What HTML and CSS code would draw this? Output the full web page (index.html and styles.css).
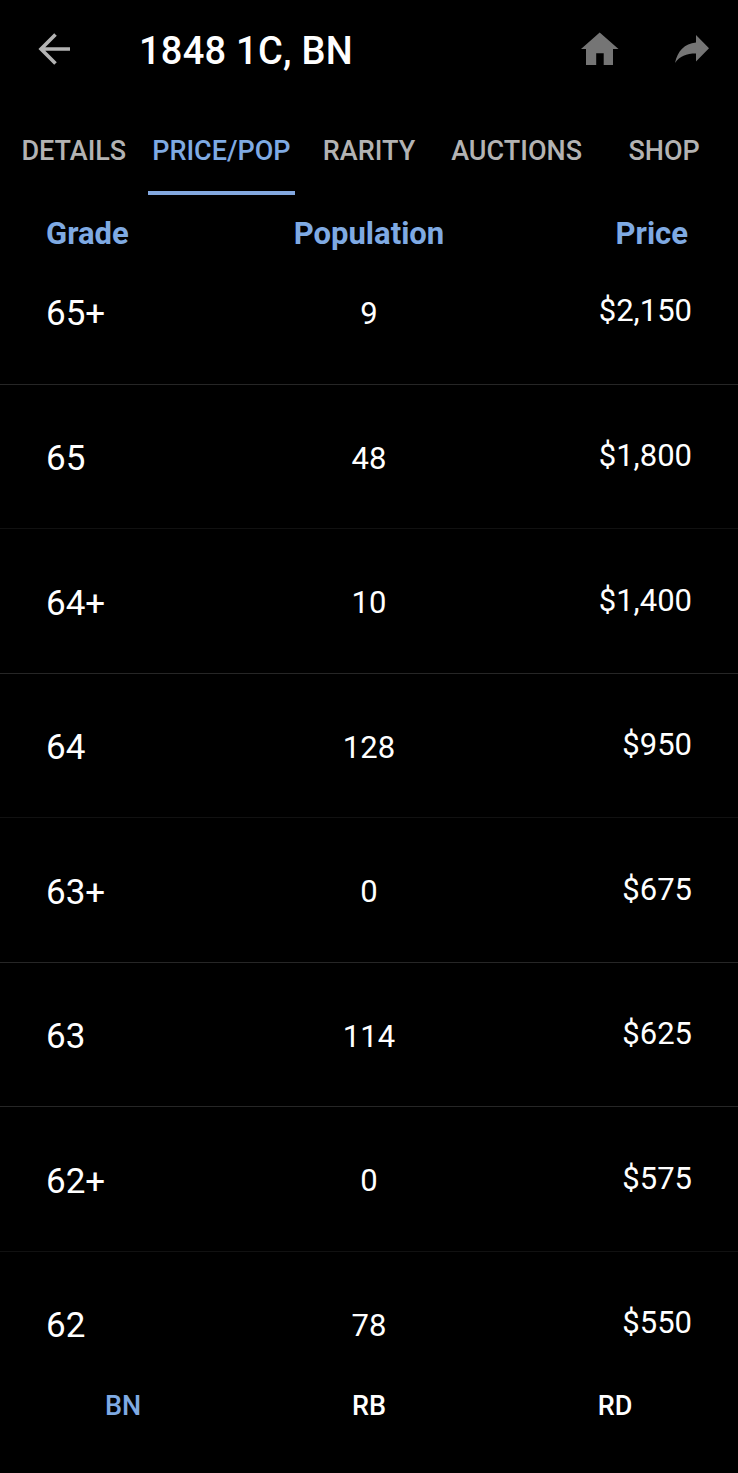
FILE: index.html
```html
<!DOCTYPE html>
<html lang="en">
<head>
    <meta charset="UTF-8">
    <meta name="viewport" content="width=device-width, initial-scale=1.0">
    <title>1848 1C, BN</title>
    <link rel="stylesheet" href="styles.css">
</head>
<body>
    <header class="top-bar">
        <a class="back" aria-label="Back">
            <svg width="32" height="32" viewBox="0 0 32 32"><path d="M32 16H3M17.5 1.5L3 16L17.5 30.5"/></svg>
        </a>
        <h1>1848 1C, BN</h1>
        <a class="home" aria-label="Home">
            <svg width="38" height="34" viewBox="0 0 38 34"><path d="M18.7 0.5L37.5 17H32V33H22.7V21.3H15.2V33H5V17H0Z"/></svg>
        </a>
        <a class="share" aria-label="Share">
            <svg width="36" height="30" viewBox="0 0 36 30"><path d="M22 1L35 14.2L22 27.5V19.5C12 19.5 6 22 1 29C3.5 17 10.5 9.5 22 8.5Z"/></svg>
        </a>
    </header>
    <nav class="tabs">
        <a class="tab">DETAILS</a>
        <a class="tab active">PRICE/POP</a>
        <a class="tab">RARITY</a>
        <a class="tab">AUCTIONS</a>
        <a class="tab">SHOP</a>
    </nav>
    <div class="columns table-head">
        <span>Grade</span>
        <span>Population</span>
        <span>Price</span>
    </div>
    <main class="grade-list">
        <div class="columns row"><span class="grade">65+</span><span class="pop">9</span><span class="price">$2,150</span></div>
        <div class="columns row faint"><span class="grade">65</span><span class="pop">48</span><span class="price">$1,800</span></div>
        <div class="columns row"><span class="grade">64+</span><span class="pop">10</span><span class="price">$1,400</span></div>
        <div class="columns row faint"><span class="grade">64</span><span class="pop">128</span><span class="price">$950</span></div>
        <div class="columns row"><span class="grade">63+</span><span class="pop">0</span><span class="price">$675</span></div>
        <div class="columns row"><span class="grade">63</span><span class="pop">114</span><span class="price">$625</span></div>
        <div class="columns row faint"><span class="grade">62+</span><span class="pop">0</span><span class="price">$575</span></div>
        <div class="columns row"><span class="grade">62</span><span class="pop">78</span><span class="price">$550</span></div>
    </main>
    <nav class="bottom-nav">
        <a class="active">BN</a>
        <a>RB</a>
        <a>RD</a>
    </nav>
</body>
</html>
```
FILE: styles.css
```css
* {
    box-sizing: border-box;
}
body {
    margin: 0;
    height: 1473px;
    display: flex;
    flex-direction: column;
    overflow: hidden;
    background: #000;
    color: #fff;
    font-family: Roboto, sans-serif;
}
svg {
    display: block;
}
.top-bar {
    height: 98px;
    flex: none;
    display: flex;
    align-items: center;
    padding: 0 28px 0 38px;
}
.top-bar h1 {
    margin: 4px 0 0 69px;
    flex: 1;
    font-size: 38px;
    font-weight: 500;
    line-height: 44px;
    letter-spacing: 0.25px;
}
.back path {
    fill: none;
    stroke: #b3b3b3;
    stroke-width: 3.6;
}
.home path,
.share path {
    fill: #757575;
}
.home {
    margin-right: 55px;
}
.tabs {
    height: 97px;
    flex: none;
    display: grid;
    grid-template-columns: repeat(5, 1fr);
}
.tab {
    padding-top: 13px;
    border-bottom: 4px solid transparent;
    color: #b3b3b3;
    font-size: 27px;
    font-weight: 500;
    line-height: 80px;
    text-align: center;
}
.tab.active {
    border-color: #83a8e0;
    color: #7faae3;
}
.columns {
    display: grid;
    grid-template-columns: 1fr 1fr 1fr;
    align-items: center;
    padding: 0 46px;
}
.columns span:nth-child(2) {
    text-align: center;
}
.columns span:nth-child(3) {
    text-align: right;
}
.table-head {
    height: 67px;
    flex: none;
    padding: 9px 50px 0 46px;
    color: #7faae3;
    font-size: 31px;
    font-weight: 700;
}
.table-head span:nth-child(2) {
    padding-left: 4px;
}
.grade-list {
    flex: 1;
    min-height: 0;
    overflow: hidden;
}
.row {
    height: 144.5px;
    padding-top: 3px;
    border-bottom: 1px solid #262626;
}
.row.faint {
    border-bottom-color: #111;
}
.row:first-child {
    height: 122.8px;
    padding-top: 0;
    padding-bottom: 19px;
}
.grade {
    padding-top: 1px;
    font-size: 35px;
}
.pop {
    font-size: 31px;
}
.price {
    font-size: 31px;
    padding-bottom: 5px;
}
.bottom-nav {
    height: 100px;
    flex: none;
    display: grid;
    grid-template-columns: repeat(3, 1fr);
    font-size: 27px;
    font-weight: 500;
    line-height: 66px;
    text-align: center;
}
.bottom-nav .active {
    color: #7faae3;
}
```
